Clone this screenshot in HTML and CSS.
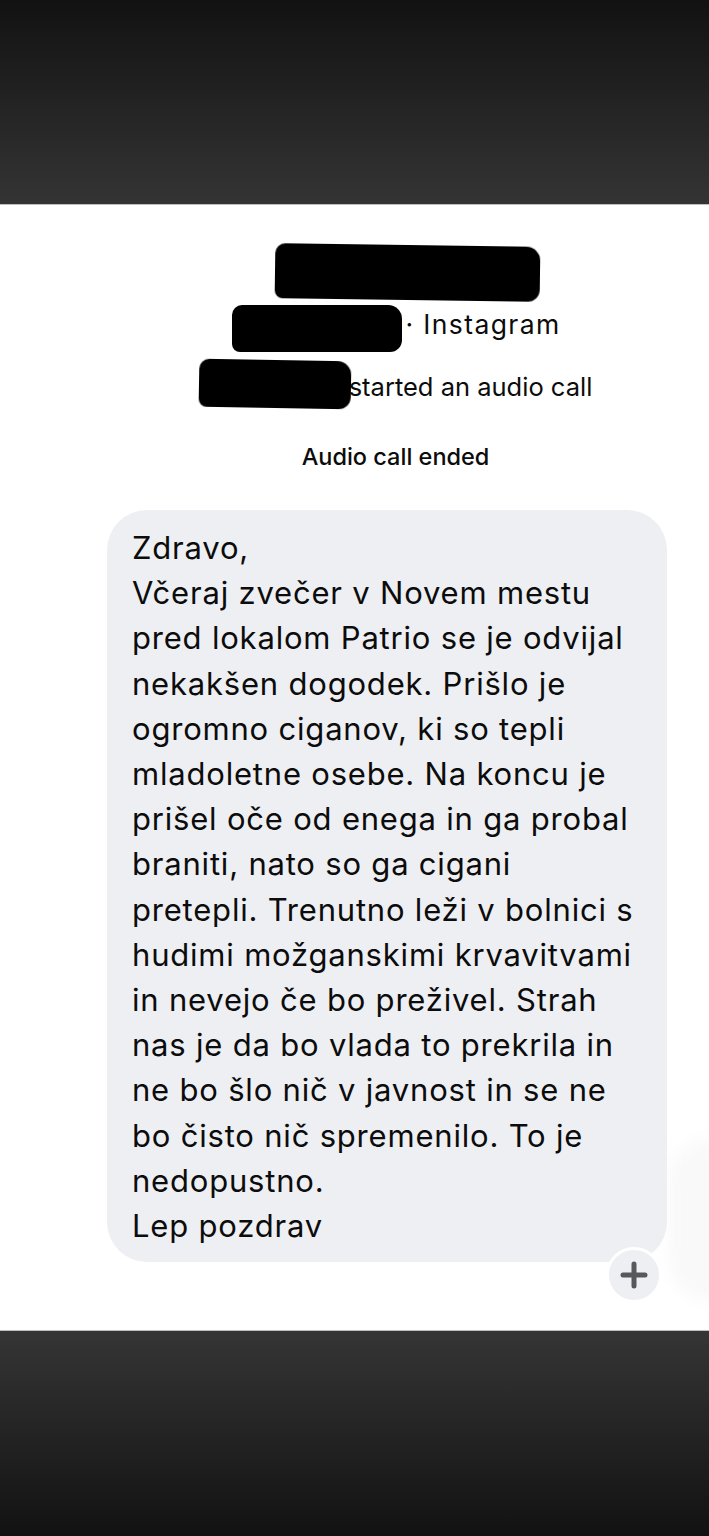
FILE: index.html
```html
<!DOCTYPE html>
<html>
  <head>
    <title>Message</title>
    <link rel="stylesheet" href="styles.css">
  </head>
  <body>
    <div class="band top"></div>

    <div class="chat">
      <div class="header">
        <div class="row">
          <span class="scribble s1"></span>
        </div>
        <div class="row r2">
          <span class="scribble s2"></span><span class="meta insta">· Instagram</span>
        </div>
        <div class="row r3">
          <span class="scribble s3"></span><span class="meta">started an audio call</span>
        </div>
        <div class="row ended">Audio call ended</div>
      </div>

      <div class="bubble-wrap">
        <div class="bubble">
          <div class="line">Zdravo,</div>
          <div class="line">Včeraj zvečer v Novem mestu</div>
          <div class="line">pred lokalom Patrio se je odvijal</div>
          <div class="line">nekakšen dogodek. Prišlo je</div>
          <div class="line">ogromno ciganov, ki so tepli</div>
          <div class="line">mladoletne osebe. Na koncu je</div>
          <div class="line">prišel oče od enega in ga probal</div>
          <div class="line">braniti, nato so ga cigani</div>
          <div class="line">pretepli. Trenutno leži v bolnici s</div>
          <div class="line">hudimi možganskimi krvavitvami</div>
          <div class="line">in nevejo če bo preživel. Strah</div>
          <div class="line">nas je da bo vlada to prekrila in</div>
          <div class="line">ne bo šlo nič v javnost in se ne</div>
          <div class="line">bo čisto nič spremenilo. To je</div>
          <div class="line">nedopustno.</div>
          <div class="line">Lep pozdrav</div>
        </div>
        <div class="react">
          <svg width="30" height="30" viewBox="0 0 30 30">
            <path d="M15 4 V26 M4 15 H26" stroke="#58585c" stroke-width="5" stroke-linecap="round"/>
          </svg>
        </div>
      </div>
    </div>

    <div class="band bottom"></div>
  </body>
</html>
```

FILE: styles.css
```css
body {
  margin: 0;
  padding: 0;
  background-color: #fff;
  font-family: Inter, "Noto Sans", sans-serif;
  color: #0c0c0c;
}

.band {
  height: 204px;
}

.top {
  background: linear-gradient(to bottom, #121212, #343434);
  border-bottom: 1px solid #bdbdbd;
}

.bottom {
  height: 205px;
  background: linear-gradient(to bottom, #353535, #121212);
  border-top: 1px solid #bdbdbd;
}

.chat {
  position: relative;
  height: 1125px;
  background-color: #fff;
  overflow: hidden;
}

/* faint grey shade at the right edge */
.chat::after {
  content: "";
  position: absolute;
  right: -40px;
  top: 935px;
  width: 80px;
  height: 160px;
  border-radius: 40px;
  background-color: #f9f9fa;
  filter: blur(8px);
}

.header {
  padding-top: 40px;
  padding-left: 82px;
}

.row {
  display: flex;
  justify-content: center;
  align-items: center;
}

.scribble {
  display: inline-block;
  background-color: #000;
  border-radius: 10px 14px 12px 8px;
  filter: blur(0.6px);
}

.s1 {
  width: 265px;
  height: 55px;
  transform: rotate(0.8deg);
  margin-left: 24px;
}

.r2 {
  margin-top: 5px;
}

.s2 {
  width: 170px;
  height: 47px;
  margin-left: 2px;
}

.r3 {
  margin-top: 8px;
}

.s3 {
  width: 152px;
  height: 48px;
  transform: rotate(1deg);
  margin-right: -5px;
}

.meta {
  font-size: 25.5px;
  margin-left: 3px;
  padding-top: 5px;
}

.insta {
  font-size: 26.5px;
  letter-spacing: 1.4px;
  padding-top: 0;
  padding-bottom: 10px;
}

.ended {
  font-size: 23.5px;
  line-height: 28px;
  font-weight: 500;
  margin-top: 35px;
}

.bubble-wrap {
  position: relative;
  z-index: 1;
  margin-top: 39px;
  margin-left: 107px;
  width: 560px;
}

.bubble {
  background-color: #eeeff3;
  border-radius: 40px;
  padding: 15px 10px 14px 25px;
  font-size: 31px;
  letter-spacing: 0.8px;
  line-height: 45.2px;
}

.line {
  white-space: nowrap;
}

.react {
  position: absolute;
  right: 5px;
  bottom: -41px;
  width: 50px;
  height: 50px;
  border-radius: 50%;
  background-color: #eeeff2;
  border: 3px solid #fff;
  display: flex;
  align-items: center;
  justify-content: center;
}
```
